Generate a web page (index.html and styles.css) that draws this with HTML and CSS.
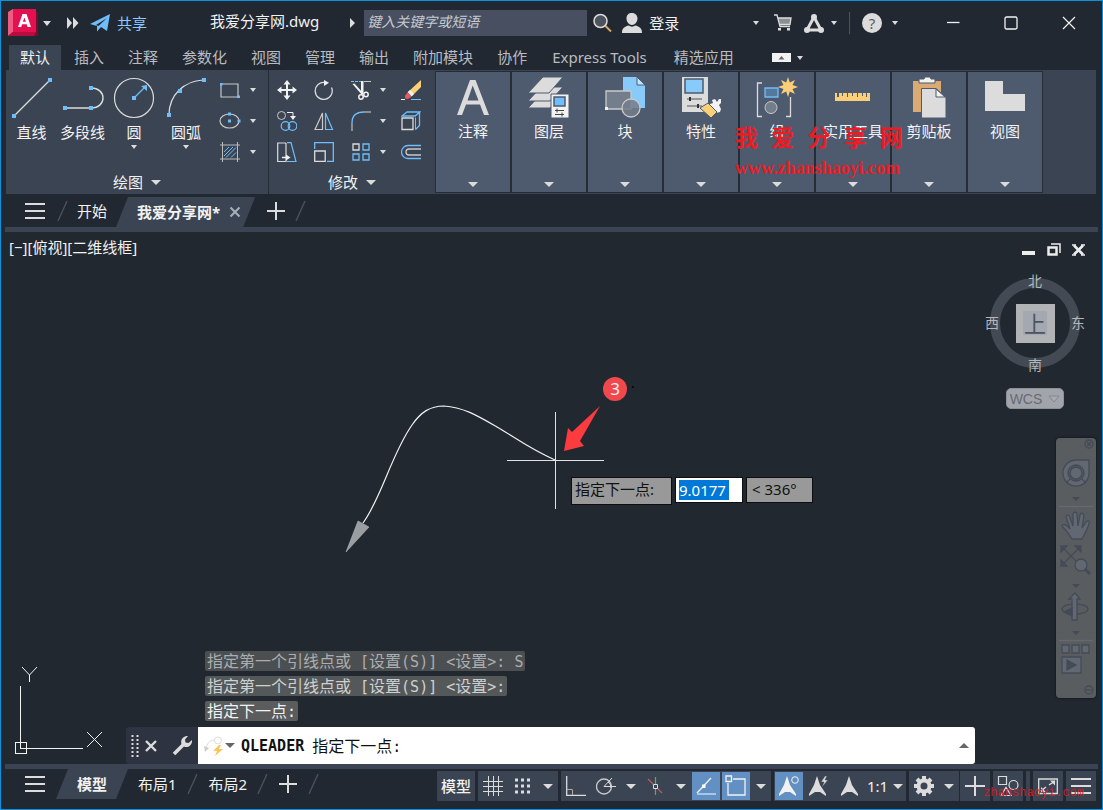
FILE: index.html
```html
<!DOCTYPE html>
<html lang="zh-CN">
<head>
<meta charset="utf-8">
<meta name="viewport" content="width=device-width, initial-scale=1">
<title>我爱分享网.dwg</title>
<link rel="stylesheet" href="styles.css">
</head>
<body>
<div class="app">
  <header class="titlebar">
    <button class="logo" aria-label="应用程序菜单">
      <svg width="30" height="28" viewBox="0 0 30 28"><path d="M4 3h26v24H4z" fill="#7c0a2b"/><path d="M0 3l5-3v23l-5 4z" fill="#ee5c83"/><path d="M0 27l5-4h23l-2 4z" fill="#b70d3f"/><path d="M5 0h23v23H5z" fill="#e51050"/><path d="M14.500 5h4L23 18h-3.500l-.8-2.800h-4.600L13.200 18H10zM16.400 8.500l-1.500 4.300h3z" fill="#fff" fill-rule="evenodd"/></svg>
      <i class="caret mid"></i>
    </button>
    <button class="more" aria-label="更多">
      <svg width="13" height="12" viewBox="0 0 13 12"><path d="M1 0l5 6-5 6zM7 0l5.500 6L7 12z" fill="#dcdcdc"/></svg>
    </button>
    <button class="share">
      <svg width="20" height="18" viewBox="0 0 20 18"><path d="M0 10L20 0 17 17l-6-4-4 4.500V12zM6 11l2.500 1L17 4z" fill="#6fbdfa" fill-rule="evenodd"/></svg>
      共享
    </button>
    <h1 class="doc-title">我爱分享网.dwg</h1>
    <button class="search-toggle" aria-label="折叠搜索"><svg width="6" height="10" viewBox="0 0 6 10"><path d="M0 0l5 5-5 5z" fill="#dcdcdc"/></svg></button>
    <input class="search" type="text" placeholder="键入关键字或短语" aria-label="键入关键字或短语">
    <button class="find" aria-label="搜索"><svg width="20" height="20" viewBox="0 0 20 20"><path d="M12.500 13l5.500 5.500" stroke="#d7a467" stroke-width="2"/><circle cx="7.500" cy="8" r="6.500" fill="#4b535c" stroke="#dcdcdc" stroke-width="1.500"/></svg></button>
    <button class="login"><svg width="20" height="20" viewBox="0 0 20 20"><path d="M10 0c3.500 0 5.500 2.500 5.500 5.500S13 12 10 12 4.500 9 4.500 5.500 6.500 0 10 0zM0 20c0-4 1.500-6 6.500-7.500 2 1.500 5 1.500 7 0C18.500 14 20 16 20 20z" fill="#dcdcdc"/></svg>登录</button>
    <div class="title-tools">
      <button aria-label="登录选项"><i class="caret"></i></button>
      <button aria-label="商店"><svg width="18" height="18" viewBox="0 0 18 18"><path d="M4 4h13l-1 7H6z" fill="#8c8f92"/><path d="M0 1h3l3 11.500h10M4 4h13l-1 6.500H6" fill="none" stroke="#dcdcdc" stroke-width="1.300"/><path d="M4 14h3v2.500H4zM13 14h3v2.500h-3z" fill="#dcdcdc"/></svg></button>
      <button class="a360" aria-label="Autodesk App"><svg width="20" height="19" viewBox="0 0 20 19"><path d="M10 3L3 16h14z" fill="none" stroke="#dcdcdc" stroke-width="3"/><circle cx="10" cy="3" r="3" fill="#dcdcdc"/><circle cx="3" cy="16" r="3" fill="#dcdcdc"/><circle cx="17" cy="16" r="3" fill="#dcdcdc"/></svg><i class="caret"></i></button>
      <span class="divider"></span>
      <button class="help" aria-label="帮助"><span class="help-mark">?</span><i class="caret"></i></button>
    </div>
    <div class="window-buttons">
      <button aria-label="最小化"><svg width="14" height="14" viewBox="0 0 14 14"><path d="M1 6.500h12.500" stroke="#f2f2f2" stroke-width="1.300"/></svg></button>
      <button aria-label="最大化"><svg width="14" height="14" viewBox="0 0 14 14"><rect x="1" y="1" width="12" height="12" rx="1.500" fill="none" stroke="#f2f2f2" stroke-width="1.300"/></svg></button>
      <button aria-label="关闭"><svg width="14" height="14" viewBox="0 0 14 14"><path d="M1 1l12 12M13 1L1 13" stroke="#f2f2f2" stroke-width="1.200"/></svg></button>
    </div>
  </header>

  <nav class="ribbon-tabs">
    <button class="rtab on">默认</button><button class="rtab">插入</button><button class="rtab">注释</button><button class="rtab">参数化</button><button class="rtab">视图</button><button class="rtab">管理</button><button class="rtab">输出</button><button class="rtab">附加模块</button><button class="rtab">协作</button><button class="rtab latin">Express Tools</button><button class="rtab">精选应用</button>
    <button class="minimize" aria-label="最小化功能区"><svg width="19" height="9" viewBox="0 0 19 9"><path d="M0 0h19v9H0z" fill="#f2f2f2"/><path d="M6.500 6.500h6l-3-3.500z" fill="#666"/></svg><i class="caret"></i></button>
  </nav>

  <section class="ribbon">
    <div class="panel draw">
      <div class="tools">
        <button class="big"><svg width="42" height="42" viewBox="0 0 42 42"><path d="M3 39L39 3" stroke="#dcdcdc" stroke-width="1.200"/><path d="M1 37h4v4H1zM37 1h4v4h-4z" fill="#6fbdfa"/></svg>直线</button>
        <button class="big"><svg width="42" height="42" viewBox="0 0 42 42"><path d="M3 31h26c16 0 16-20 0-20" fill="none" stroke="#dcdcdc" stroke-width="1.400"/><path d="M1 29h4v4H1zM27 29h4v4h-4zM27 9h4v4h-4z" fill="#6fbdfa"/></svg>多段线</button>
        <button class="big"><svg width="42" height="42" viewBox="0 0 42 42"><circle cx="21" cy="21" r="19.500" fill="none" stroke="#dcdcdc" stroke-width="1.200"/><path d="M21 21l10-10" stroke="#6fbdfa" stroke-width="1.300"/><path d="M19 19h4v4h-4zM34 8v6l-6-5z" fill="#6fbdfa"/></svg>圆<i class="caret"></i></button>
        <button class="big"><svg width="42" height="42" viewBox="0 0 42 42"><path d="M4 38C4 17 20 4 38 3" fill="none" stroke="#dcdcdc" stroke-width="1.200"/><path d="M2 36h4v4H2zM13 12h4v4h-4zM37 1h4v4h-4z" fill="#6fbdfa"/></svg>圆弧<i class="caret"></i></button>
        <div class="small-grid">
          <button aria-label="矩形"><svg width="22" height="20" viewBox="0 0 22 20"><path d="M2 4h17v13H2z" fill="none" stroke="#c9c9c9" stroke-width="1.200"/><path d="M1 3h2.500v2.500H1zM18 15.500h3V18h-3z" fill="#6fbdfa"/></svg></button><button aria-label="矩形选项"><i class="caret"></i></button>
          <button aria-label="椭圆"><svg width="22" height="20" viewBox="0 0 22 20"><ellipse cx="10.500" cy="10" rx="9.500" ry="7" fill="none" stroke="#c9c9c9" stroke-width="1.200"/><path d="M9 1.500h3v3H9zM9 8.500h3v3H9zM18.500 8.500h3v3h-3z" fill="#6fbdfa"/></svg></button><button aria-label="椭圆选项"><i class="caret"></i></button>
          <button aria-label="图案填充"><svg width="22" height="20" viewBox="0 0 22 20"><path d="M5 10l5-5M5 14l9-9M7 15.500l10-10M12 15.500l5-5" stroke="#6fbdfa"/><path d="M1 3h20M1 17h20M3.500 0v20M18.500 0v20" stroke="#bbb"/></svg></button><button aria-label="图案填充选项"><i class="caret"></i></button>
        </div>
      </div>
      <button class="panel-title">绘图<i class="caret wide"></i></button>
    </div>

    <div class="panel modify">
      <div class="modify-grid">
        <button aria-label="移动"><svg width="20" height="20" viewBox="0 0 20 20"><path d="M10 3v14M3 10h14" stroke="#f2f2f2" stroke-width="2"/><path d="M10 0l3.500 4.500h-7zM10 20l-3.500-4.500h7zM0 10l4.500-3.500v7zM20 10l-4.500 3.500v-7z" fill="#f2f2f2"/></svg></button>
        <button aria-label="旋转"><svg width="20" height="20" viewBox="0 0 20 20"><path d="M17.500 7.500A8.500 8.500 0 1 1 11 2.500" fill="none" stroke="#dcdcdc" stroke-width="1.300"/><path d="M10 0l5 2.800L10 6z" fill="#f2f2f2"/></svg></button>
        <button aria-label="修剪"><svg width="20" height="20" viewBox="0 0 20 20"><path d="M0 1.500h10" stroke="#6fbdfa" stroke-dasharray="3 1"/><path d="M13 1.500h7" stroke="#c9c9c9"/><path d="M1.500 4l2-.5 9 10-1.500 1.500zM10 1h2.500v12.500H10z" fill="#f2f2f2"/><circle cx="10" cy="17" r="2.200" fill="none" stroke="#f2f2f2" stroke-width="1.500"/><circle cx="15" cy="14.500" r="2.200" fill="none" stroke="#f2f2f2" stroke-width="1.500"/></svg></button>
        <button aria-label="修剪选项"><i class="caret"></i></button>
        <button aria-label="删除"><svg width="20" height="20" viewBox="0 0 20 20"><path d="M0 19.500h4" stroke="#f2f2f2"/><path d="M10 19.500h10" stroke="#6fbdfa"/><path d="M20 0v7l-9 9-4-4z" fill="#fbcf78"/><path d="M9 10l4 4-2.500 2.500-4-4z" fill="#f2f2f2"/><path d="M7 12.500l3.500 4C8 19 5 20 4 17.500c-.5-2 1-3.500 3-5z" fill="#ef5461"/></svg></button>

        <button aria-label="复制"><svg width="20" height="20" viewBox="0 0 20 20"><circle cx="4.500" cy="4.500" r="4" fill="none" stroke="#c9c9c9"/><circle cx="8.500" cy="15" r="4.300" fill="none" stroke="#6fbdfa" stroke-width="1.200"/><circle cx="15.500" cy="15" r="4.300" fill="none" stroke="#6fbdfa" stroke-width="1.200"/><path d="M10 1.500h6V6" fill="none" stroke="#f2f2f2"/><path d="M13 5h6l-3 4z" fill="#f2f2f2"/></svg></button>
        <button aria-label="镜像"><svg width="20" height="20" viewBox="0 0 20 20"><path d="M8.500 2v16.500H1z" fill="none" stroke="#c9c9c9" stroke-width="1.200"/><path d="M11.500 2v16.500h7z" fill="none" stroke="#6fbdfa" stroke-width="1.200"/></svg></button>
        <button aria-label="圆角"><svg width="20" height="20" viewBox="0 0 20 20"><path d="M1 20v-8M13 1h7" stroke="#dcdcdc"/><path d="M1 12C1 4 6 1 13 1" fill="none" stroke="#6fbdfa" stroke-width="1.300"/></svg></button>
        <button aria-label="圆角选项"><i class="caret"></i></button>
        <button aria-label="分解"><svg width="20" height="20" viewBox="0 0 20 20"><path d="M1 5l5-4h13l-5 4zM14.500 18.500l4-4V2" fill="none" stroke="#6fbdfa" stroke-width="1.300"/><path d="M1 7h11v11.500H1z" fill="none" stroke="#dcdcdc" stroke-width="1.300"/><path d="M14.500 6.500v12" stroke="#6fbdfa"/></svg></button>

        <button aria-label="拉伸"><svg width="20" height="20" viewBox="0 0 20 20"><path d="M9 1H.700v18.500H9V1" fill="none" stroke="#dcdcdc" stroke-width="1.200"/><path d="M10 .700h4l5 18.800h-9" fill="none" stroke="#6fbdfa" stroke-width="1.200"/><path d="M5 15.500h5" stroke="#f2f2f2" stroke-width="1.500"/><path d="M9 12.500l4.500 3-4.500 3z" fill="#f2f2f2"/></svg></button>
        <button aria-label="缩放"><svg width="20" height="20" viewBox="0 0 20 20"><path d="M.700 7V.700h18.600v18.600H13" fill="none" stroke="#6fbdfa" stroke-width="1.300"/><path d="M.700 9h10.500v10.300H.700z" fill="none" stroke="#dcdcdc" stroke-width="1.300"/></svg></button>
        <button aria-label="阵列"><svg width="20" height="20" viewBox="0 0 20 20"><path d="M2 2h6v6H2z" fill="none" stroke="#dcdcdc" stroke-width="1.300"/><path d="M12 2h6v6h-6zM2 12h6v6H2zM12 12h6v6h-6z" fill="none" stroke="#6fbdfa" stroke-width="1.300"/></svg></button>
        <button aria-label="阵列选项"><i class="caret"></i></button>
        <button aria-label="偏移"><svg width="22" height="20" viewBox="0 0 22 20"><path d="M21 3.500H8a6.500 6.500 0 0 0 0 13h13" fill="none" stroke="#6fbdfa" stroke-width="1.300"/><path d="M21 7H9a3 3 0 0 0 0 6h12" fill="none" stroke="#c9c9c9" stroke-width="1.300"/></svg></button>
      </div>
      <button class="panel-title">修改<i class="caret wide"></i></button>
    </div>

    <button class="folded"><svg width="42" height="42" viewBox="0 0 42 42"><path d="M18 3h5.500L37 38h-5l-4-10.500H14L10 38H5zM20.700 8.500L15.500 23.500h11z" fill="#dcdcdc" fill-rule="evenodd"/></svg><span>注释</span><i class="caret wide"></i></button>
    <button class="folded"><svg width="42" height="42" viewBox="0 0 42 42"><path d="M0 31l13-14h22L22 31z" fill="#dcdcdc" stroke="#4e5a6e"/><path d="M0 24l13-14h22L22 24z" fill="#dcdcdc" stroke="#4e5a6e"/><path d="M0 16L15 0h20L21 16z" fill="#dcdcdc" stroke="#4e5a6e"/><path d="M23 17h18v24H23z" fill="#f2f2f2" stroke="#4e5a6e"/><path d="M26 20h11v9H26z" fill="#6fbdfa" stroke="#4e5a6e" stroke-width="1.500"/><path d="M27 33.500h9M27 37.500h9M29 31.500v4M34 35.500v4" stroke="#444"/></svg><span>图层</span><i class="caret wide"></i></button>
    <button class="folded"><svg width="42" height="42" viewBox="0 0 42 42"><path d="M19 0h14l8 8v23H19z" fill="#88cbfb"/><path d="M33 0v8h8z" fill="#c2e5ff" stroke="#4e5a6e"/><path d="M2 14h25v18H2z" fill="#747d8b" stroke="#c9c9c9" stroke-width="1.300"/><circle cx="27" cy="31" r="9" fill="#747d8b" fill-opacity=".85" stroke="#c9c9c9" stroke-width="1.300"/><path d="M1 30h3v3H1z" fill="#f2f2f2"/></svg><span>块</span><i class="caret wide"></i></button>
    <button class="folded"><svg width="42" height="42" viewBox="0 0 42 42"><path d="M2 0h26v35H2z" fill="#dcdcdc"/><path d="M5 2h18v14H5z" fill="#88cbfb" stroke="#4e5a6e" stroke-width="1.500"/><path d="M7 22h15M7 29h15" stroke="#555"/><path d="M10 20v4M18 27v4" stroke="#333" stroke-width="2"/><path d="M27 28l6-2-1-3 3-1 2 3 2-3h2v4l-2 2 2 4-1 3-4 1z" fill="#f2f2f2"/><path d="M20 31l8-5 9 9-6 6z" fill="#fbcf78" stroke="#4e5a6e"/></svg><span>特性</span><i class="caret wide"></i></button>
    <button class="folded"><svg width="42" height="42" viewBox="0 0 42 42"><path d="M6 6H1.500v33.500H6M30 39.500h4.500V20" fill="none" stroke="#dcdcdc" stroke-width="1.300"/><path d="M9 11h13v9H9z" fill="#56789d" stroke="#6fbdfa" stroke-width="1.300"/><circle cx="15" cy="30.500" r="6" fill="#747d8b" stroke="#c9c9c9"/><path d="M32 0l1.800 5.500L39 3l-2.500 5L42 10l-5.500 2 2.500 5-5.200-2.500L32 20l-1.800-5.500L25 17l2.500-5L22 10l5.500-2L25 3l5.200 2.500z" fill="#fbcf78"/></svg><span>组</span><i class="caret wide"></i></button>
    <button class="folded"><svg width="42" height="42" viewBox="0 0 42 42"><path d="M3 16h2v4h2v-4h3v3h1v-3h4v4h1v-4h4v3h1v-3h4v4h1v-4h4v3h1v-3h3v4h1v-4h3v8H3z" fill="#fbcf78"/></svg><span>实用工具</span><i class="caret wide"></i></button>
    <button class="folded"><svg width="42" height="42" viewBox="0 0 42 42"><path d="M5 4h28v31H5z" fill="#d9ab73"/><path d="M11 6V2h5l1-2h5l1 2h4v4z" fill="#f2f2f2" stroke="#4e5a6e"/><path d="M13.500 11.500H28l10 9V41H13.500z" fill="#dcdcdc" stroke="#4e5a6e"/><path d="M28 12v8h9z" fill="#f2f2f2" stroke="#4e5a6e"/></svg><span>剪贴板</span><i class="caret wide"></i></button>
    <button class="folded"><svg width="42" height="42" viewBox="0 0 42 42"><path d="M1 4h18v13h22v17H1z" fill="#dcdcdc"/></svg><span>视图</span><i class="caret wide"></i></button>
    <div class="watermark" aria-hidden="true">
      <div class="wm-name"><span>我</span><span>爱</span><span>分</span><span>享</span><span>网</span></div>
      <div class="wm-url">www.zhanshaoyi.com</div>
    </div>
  </section>

  <nav class="file-tabs">
    <button class="burger" aria-label="文件选项卡菜单"><i></i><i></i><i></i></button>
    <svg class="slash" width="12" height="22" viewBox="0 0 12 22"><path d="M1 21L10 1" stroke="#4b5463" stroke-width="1.300"/></svg>
    <button class="file-tab">开始</button>
    <button class="file-tab on">我爱分享网*<svg width="12" height="12" viewBox="0 0 12 12"><path d="M1.500 1.500l9 9M10.500 1.500l-9 9" stroke="#a9afb8" stroke-width="2"/></svg></button>
    <button class="plus" aria-label="新建图形"><svg width="18" height="18" viewBox="0 0 18 18"><path d="M9 0v18M0 9h18" stroke="#dcdcdc" stroke-width="2"/></svg></button>
    <svg class="slash" width="12" height="22" viewBox="0 0 12 22"><path d="M1 21L10 1" stroke="#4b5463" stroke-width="1.300"/></svg>
  </nav>

  <main class="canvas">
    <svg class="drawing" width="700" height="400" viewBox="1 232 700 400">
      <path d="M363 523C382 497 391 455 412 425C421 412 430 406 444 406C463 407 478 416 497 427S530 449 555 460" fill="none" stroke="#f2f2f2" stroke-width="1.200"/>
      <path d="M346 552l12-31 11 6z" fill="#9b9ea1" stroke="#c0c2c4" stroke-width=".5"/>
      <path d="M555.500 412v97M507 460.500h97" stroke="#e2e2e2" shape-rendering="crispEdges"/>
      <path d="M600 406l-20 35 4 5-20 5 4-23 4 4z" fill="#fb3b3d"/>
      <path d="M632 386h2v2h-2z" fill="#0a0c0f"/>
    </svg>
    <span class="step">3</span>
    <div class="view-label">[−][俯视][二维线框]</div>
    <div class="dyn">
      <label for="dist" class="dyn-box prompt">指定下一点:</label>
      <span class="dyn-field"><input id="dist" type="text" value="9.0177"></span>
      <span class="dyn-box angle">&lt; 336°</span>
    </div>
    <div class="view-buttons">
      <button aria-label="最小化视口"><svg width="14" height="14" viewBox="0 0 14 14"><path d="M0 8h13v4H0z" fill="#ededed"/></svg></button>
      <button aria-label="还原视口"><svg width="14" height="14" viewBox="0 0 14 14"><path d="M4 1h9v9" fill="none" stroke="#ededed" stroke-width="1.500"/><path d="M1.500 4.500h8v7h-8z" fill="none" stroke="#ededed" stroke-width="2.500"/></svg></button>
      <button aria-label="关闭视口"><svg width="14" height="14" viewBox="0 0 14 14"><path d="M2 2.500l9 9M11 2.500l-9 9" stroke="#ededed" stroke-width="2.600"/><path d="M0 2h4M9 2h4M0 12h4M9 12h4" stroke="#ededed" stroke-width="1.500"/></svg></button>
    </div>
    <div class="cube">
      <span class="north">北</span><span class="west">西</span>
      <button class="face"><span>上</span></button>
      <span class="east">东</span><span class="south">南</span>
    </div>
    <button class="wcs">WCS<svg width="12" height="8" viewBox="0 0 12 8"><path d="M1 1h10L6 7z" fill="#a9acb4" stroke="#83868f"/></svg></button>
    <div class="navbar">
      <svg width="40" height="260" viewBox="1056 439 40 260" fill="none" stroke="#444b57" stroke-width="1.300">
        <circle cx="1089" cy="445" r="4"/><path d="M1087 443l4 4M1091 443l-4 4"/>
        <path d="M1089 461v13a13 13 0 1 1-13-13z" fill="#626872"/><circle cx="1076" cy="474" r="8" fill="#595d60"/><circle cx="1076" cy="474" r="6" fill="#626872"/><path d="M1070 480l-4 4M1082 480l4 4"/>
        <path d="M1072 498h8l-4 4z" fill="#444b57" stroke="none"/>
        <path d="M1059 507.500h34" stroke="#656a6e"/>
        <path d="M1072 540c-3-5-6-9-10-13 1-3 5-1 8 3l-4-12c1-3 4-2 4 1l3 8v-12c1-3 4-2 4 0l1 12 2-11c1-3 4-2 4 1l-2 12 4-6c2-2 4-1 3 2-2 6-5 11-7 15z" fill="#626872"/>
        <path d="M1062 548l18 18M1062 566l18-18"/><path d="M1061 547h6l-6 6zM1081 547v6l-6-6zM1061 567v-6l6 6z" fill="#444b57"/><circle cx="1081" cy="566" r="6" fill="#626872"/><path d="M1085 570l5 5" stroke-width="3"/>
        <path d="M1072 585h8l-4 4z" fill="#444b57" stroke="none"/>
        <ellipse cx="1075" cy="610" rx="13" ry="5"/><path d="M1075 594l5 6h-3v21h-5v-21h-3z" fill="#626872"/><path d="M1072 609l-8 4 8 4z" fill="#444b57"/>
        <path d="M1072 632h8l-4 4z" fill="#444b57" stroke="none"/>
        <path d="M1059 641.500h34" stroke="#656a6e"/>
        <path d="M1062 646h7v8h-7zM1072 646h7v8h-7zM1082 646h7v8h-7zM1062 658h19v16h-19z" fill="#626872"/><path d="M1067 661v10l9-5z" fill="#444b57"/>
        <circle cx="1089" cy="691" r="4"/><path d="M1086 691h6"/>
      </svg>
    </div>
    <svg class="ucs" width="100" height="96" viewBox="10 662 100 96" fill="none" stroke="#f2f2f2"><path d="M15.500 742.500h11v11h-11zM20.500 686v62.500H83" shape-rendering="crispEdges"/><path d="M22 667l7.500 8 7.500-8M29.500 675v7M87 732l15 15M102 732l-15 15"/></svg>
    <div class="console">
      <div class="history">
        <p class="h1">指定第一个引线点或<code> [</code>设置<code>(S)] &lt;</code>设置<code>&gt;: S</code></p>
        <p class="h2">指定第一个引线点或<code> [</code>设置<code>(S)] &lt;</code>设置<code>&gt;:</code></p>
        <p class="h3">指定下一点<code>:</code></p>
      </div>
      <div class="command">
        <div class="grip">
          <svg width="8" height="22" viewBox="0 0 8 22"><path d="M1.500 0v22M6.500 0v22" stroke="#dcdcdc" stroke-width="2" stroke-dasharray="2 2"/></svg>
          <button aria-label="关闭命令行"><svg width="12" height="12" viewBox="0 0 12 12"><path d="M1 1l10 10M11 1L1 11" stroke="#dcdcdc" stroke-width="2.400"/></svg></button>
          <button class="wrench" aria-label="自定义"><svg width="20" height="20" viewBox="0 0 20 20"><path d="M2 18L12 8" stroke="#dcdcdc" stroke-width="3.500"/><path d="M16 0l-3 3.500.5 3 3 .5L20 4c.5 5-4 8.500-8 6.500L9.500 8C8 3.500 12-.5 16 0z" fill="#dcdcdc"/></svg></button>
        </div>
        <label class="prompt-line">
          <svg width="20" height="20" viewBox="0 0 20 20"><circle cx="14" cy="4.500" r="3.500" fill="none" stroke="#ddd"/><path d="M10.500 4C5 4 3 8 2 13" fill="none" stroke="#ddd"/><path d="M0 10l5 2-4 4z" fill="#ccc"/><path d="M15 9l-6 6h4l-2 5 8-7h-4l2-4z" fill="#fbc559"/></svg>
          <i class="caret wide dark"></i>
          <b>QLEADER</b><span>指定下一点<code>:</code></span>
          <input type="text" aria-label="命令">
          <i class="caret-up"></i>
        </label>
      </div>
    </div>
  </main>

  <footer class="status">
    <nav class="layout-tabs">
      <button class="burger" aria-label="布局菜单"><i></i><i></i><i></i></button>
      <button class="layout on">模型</button>
      <button class="layout">布局1</button>
      <svg class="slash" width="12" height="22" viewBox="0 0 12 22"><path d="M1 21L10 1" stroke="#4b5463" stroke-width="1.300"/></svg>
      <button class="layout">布局2</button>
      <svg class="slash" width="12" height="22" viewBox="0 0 12 22"><path d="M1 21L10 1" stroke="#4b5463" stroke-width="1.300"/></svg>
      <button class="plus" aria-label="新建布局"><svg width="18" height="18" viewBox="0 0 18 18"><path d="M9 0v18M0 9h18" stroke="#dcdcdc" stroke-width="2"/></svg></button>
      <svg class="slash" width="12" height="22" viewBox="0 0 12 22"><path d="M1 21L10 1" stroke="#4b5463" stroke-width="1.300"/></svg>
    </nav>
    <div class="status-tools">
      <div class="group"><button class="model">模型</button></div>
      <div class="group">
        <button aria-label="栅格"><svg width="20" height="20" viewBox="0 0 20 20"><path d="M5.500 0v20M10.500 0v20M15.500 0v20M0 5.500h20M0 10.500h20M0 15.500h20" stroke="#dcdcdc"/></svg></button>
        <button aria-label="捕捉"><svg width="20" height="20" viewBox="0 0 20 20"><path d="M2 4h17M2 10h17M2 16h17" stroke="#dcdcdc" stroke-width="3" stroke-dasharray="3 3"/></svg></button>
        <button class="drop" aria-label="捕捉选项"><i class="caret wide"></i></button>
      </div>
      <div class="group">
        <button aria-label="正交"><svg width="20" height="20" viewBox="0 0 20 20"><path d="M.700 0v19.300H20" fill="none" stroke="#dcdcdc" stroke-width="1.300"/><path d="M1 13.500h5.500V19" fill="none" stroke="#aaa"/></svg></button>
        <button aria-label="极轴"><svg width="20" height="20" viewBox="0 0 20 20"><circle cx="8" cy="10.500" r="7.500" fill="none" stroke="#c9c9c9" stroke-width="1.300"/><path d="M20 10.500H8L16 2" fill="none" stroke="#dcdcdc"/><path d="M12 6q3 1 3 6" fill="none" stroke="#dcdcdc"/></svg></button>
        <button class="drop" aria-label="极轴选项"><i class="caret wide"></i></button>
        <button aria-label="等轴测草图"><svg width="20" height="20" viewBox="0 0 20 20"><path d="M2 3l14 14" stroke="#b95c62" stroke-width="1.200"/><path d="M9.500 1v18" stroke="#52ae73" stroke-width="1.200"/><path d="M7.500 8.500h4v4h-4z" fill="#3b4453" stroke="#dcdcdc"/></svg></button>
        <button class="drop" aria-label="等轴测选项"><i class="caret wide"></i></button>
        <button class="active" aria-label="对象捕捉追踪"><svg width="20" height="20" viewBox="0 0 20 20"><path d="M15 2L1 17" stroke="#f2f2f2" stroke-width="1.300"/><path d="M1 18h19" stroke="#a9c6e6" stroke-width="2"/><path d="M6 8.500h3.500V12H6z" fill="#fff"/></svg></button>
        <button class="active" aria-label="对象捕捉"><svg width="22" height="22" viewBox="0 0 22 22"><path d="M8 4h12v16H3V8" fill="none" stroke="#f2f2f2" stroke-width="1.300"/><path d="M1 1h5.500v5.500H1z" fill="none" stroke="#f2f2f2" stroke-width="1.300"/></svg></button>
        <button class="drop" aria-label="捕捉设置"><i class="caret wide"></i></button>
      </div>
      <div class="group">
        <button class="active" aria-label="注释可见性"><svg width="20" height="20" viewBox="0 0 20 20"><path d="M8 0l3 9 6 9v2l-6-4H6l-6 4v-2l5-9z" fill="#f2f2f2"/><circle cx="16" cy="4" r="3.300" fill="#6390c2" stroke="#f2f2f2"/></svg></button>
        <button aria-label="自动缩放"><svg width="20" height="20" viewBox="0 0 20 20"><path d="M8 0l3 9 6 9v2l-6-4H6l-6 4v-2l5-9z" fill="#dcdcdc"/><path d="M16 0l-4 6h3l-2 5 6-7h-3l2-4z" fill="#dcdcdc" stroke="#3b4453" stroke-width=".5"/></svg></button>
        <button aria-label="注释比例"><svg width="20" height="20" viewBox="0 0 20 20"><path d="M10 0l3 9 6 9v2l-6-4H8l-6 4v-2l5-9z" fill="#dcdcdc"/></svg></button>
        <button class="ratio">1:1<i class="caret wide"></i></button>
      </div>
      <div class="group workspace">
        <button aria-label="切换工作空间"><svg width="20" height="20" viewBox="0 0 20 20"><circle cx="10" cy="10" r="5.500" fill="none" stroke="#dcdcdc" stroke-width="4"/><path d="M10 0v4M10 16v4M0 10h4M16 10h4M3 3l3 3M14 14l3 3M17 3l-3 3M6 14l-3 3" stroke="#dcdcdc" stroke-width="4"/></svg></button>
        <button class="drop" aria-label="工作空间选项"><i class="caret wide"></i></button>
        <button class="monitor" aria-label="注释监视器"><svg width="20" height="20" viewBox="0 0 20 20"><path d="M10 0v20M0 10h20" stroke="#dcdcdc" stroke-width="2"/></svg></button>
      </div>
      <div class="group"><button aria-label="隔离对象"><svg width="22" height="22" viewBox="0 0 22 22" fill="none" stroke="#dcdcdc" stroke-width="1.200"><path d="M1.500 1.500h8v8h-8zM4 20.500l5-8 5 8z"/><circle cx="16.500" cy="10" r="4.500"/></svg></button></div>
      <div class="group sliver"></div>
      <div class="group"><button aria-label="全屏显示"><svg width="20" height="20" viewBox="0 0 20 20"><path d="M.700 3h18.600v14.500H.700z" fill="none" stroke="#dcdcdc" stroke-width="1.300"/><path d="M11 9l6-4M3 15l5-4" stroke="#dcdcdc" stroke-width="1.500"/><path d="M12 4.500h5v5zM3 11v5h5z" fill="#dcdcdc"/></svg></button></div>
      <div class="group"><button class="burger" aria-label="自定义状态栏"><i></i><i></i><i></i></button></div>
    </div>
    <div class="wm-corner" aria-hidden="true">zhanshaoyi.com</div>
  </footer>
</div>
</body>
</html>
```
FILE: styles.css
```css
*, *::before { box-sizing: border-box; }

body {
  margin: 0;
  background: #222831;
  color: #f2f2f2;
  font: 15px/20px "Noto Sans", "Noto Sans CJK SC", sans-serif;
}

button, input {
  margin: 0;
  padding: 0;
  border: 0;
  background: none;
  color: inherit;
  font: inherit;
}

button {
  display: flex;
  align-items: center;
  justify-content: center;
  white-space: nowrap;
}

svg { display: block; flex: none; }
p { margin: 0; }

.app {
  display: flex;
  flex-direction: column;
  min-height: 100vh;
  border: 1px solid #0a93dc;
}

.caret {
  width: 0;
  border: 3px solid transparent;
  border-top: 4px solid #dcdcdc;
  border-bottom: 0;
}
.caret.mid { border-width: 5px 4px 0; }
.caret.wide { border-width: 5px 5px 0; }
.caret.dark { border-top-color: #666; }
.caret-up {
  border: 5px solid transparent;
  border-bottom-color: #666;
  border-top: 0;
}

/* Title bar */
.titlebar {
  display: flex;
  align-items: center;
  height: 44px;
  padding: 0 4px 0 7px;
}
.logo { gap: 5px; }
.more { margin-left: 15px; }
.share { gap: 7px; margin-left: 11px; color: #8ccaff; }
.doc-title {
  margin: 0 31px 4px 63px;
  font-size: 15px;
  font-weight: 400;
  line-height: 20px;
  white-space: nowrap;
}
.search {
  width: 223px;
  height: 26px;
  margin-left: 8px;
  padding: 0 3px 3px;
  background: #474f61;
  font-size: 14px;
  font-style: italic;
}
.search::placeholder { color: #c6cad1; opacity: 1; }
.find { margin-left: 6px; }
.login { gap: 7px; margin-left: 9px; }
.title-tools {
  display: flex;
  align-items: center;
  gap: 12px;
  margin-left: auto;
}
.title-tools button:first-child { margin-right: 3px; }
.a360 { gap: 7px; }
.divider { width: 1px; height: 22px; background: #4b5463; }
.help { gap: 10px; margin-right: 26px; }
.help-mark {
  width: 20px;
  border-radius: 50%;
  background: #dcdcdc;
  color: #555b63;
  text-align: center;
}
.window-buttons { display: flex; }
.window-buttons button { width: 58px; height: 40px; }

/* Ribbon tabs */
.ribbon-tabs { display: flex; padding-left: 7px; }
.rtab { height: 25px; margin: 0 1px; padding: 0 11px 2px; color: #b9bcc1; }
.rtab.on { background: #3b4453; color: #f2f2f2; }
.rtab.latin { padding: 0 14px 2px 12px; }
.minimize { gap: 6px; margin-left: 26px; }

/* Ribbon */
.ribbon {
  position: relative;
  display: flex;
  height: 124px;
  margin: 0 6px 0 5px;
  background: #3b4453;
}
.panel { display: flex; flex-direction: column; justify-content: space-between; padding-bottom: 2px; }
.draw { width: 263px; border-right: 1px solid #262c36; }
.modify { width: 166px; }
.tools { display: flex; padding-top: 7px; }
.big {
  flex-direction: column;
  justify-content: flex-start;
  width: 51px;
  line-height: 26px;
}
.big:nth-child(n+3) { width: 52px; }
.small-grid {
  display: grid;
  grid-template-columns: 36px 10px;
  grid-auto-rows: 31px;
  margin-top: -3px;
}
.modify-grid {
  display: grid;
  grid-template-columns: 36px 38px 36px 8px 48px;
  grid-auto-rows: 31px;
  padding-top: 4px;
}
.panel-title { gap: 8px; height: 20px; }
.folded {
  flex-direction: column;
  justify-content: flex-start;
  width: 76px;
  margin: 1px 0;
  padding: 5px 0;
  border: 1px solid #262c36;
  background: #4e5a6e;
}
.folded span { line-height: 24px; }
.folded .caret { margin-top: auto; }
.watermark {
  position: absolute;
  left: 729px;
  top: 52px;
  width: 168px;
  color: #ec1c24;
  font-weight: 700;
}
.wm-name { display: flex; justify-content: space-between; font-size: 23px; line-height: 30px; }
.wm-url { font: 700 18px/32px "Liberation Serif", serif; }

/* Drawing tabs */
.file-tabs {
  display: flex;
  align-items: center;
  height: 38px;
  margin: 0 4px;
  padding-left: 20px;
  border-bottom: 5px solid #3b4453;
}
.burger { flex-direction: column; gap: 5px; width: 20px; }
.burger i { width: 20px; height: 2px; background: #dcdcdc; }
.file-tabs .burger { margin-right: 12px; }
.file-tab { padding: 0 9px 0 8px; }
.file-tab.on {
  align-self: flex-end;
  gap: 9px;
  height: 30px;
  padding: 0 14px 0 21px;
  background: #3b4453;
  clip-path: polygon(12px 0, 100% 0, calc(100% - 12px) 100%, 0 100%);
  font-weight: 700;
}
.file-tabs .plus { margin: 0 10px 0 12px; }

/* Drawing area */
.canvas { position: relative; flex: 1; min-height: 532px; background: #212830; }
.drawing { position: absolute; left: 0; top: 0; }
.view-label { position: absolute; left: 8px; top: 5px; }
.step {
  position: absolute;
  left: 602px;
  top: 145px;
  width: 24px;
  border-radius: 50%;
  background: #f0484c;
  font-size: 17px;
  line-height: 24px;
  text-align: center;
}
.dyn {
  position: absolute;
  left: 570px;
  top: 245px;
  display: flex;
  align-items: flex-start;
  gap: 3px;
  color: #111;
}
.dyn-box, .dyn-field { height: 26px; padding: 0 3px; border: 1px solid #0c0e11; line-height: 22px; }
.dyn-box { background: #999; }
.prompt { width: 101px; height: 28px; }
.angle { width: 67px; padding: 0 5px; }
.dyn-field { display: flex; align-items: center; width: 68px; background: #fff; }
.dyn-field input { width: 50px; height: 20px; background: #0078d7; color: #fff; }
.view-buttons { position: absolute; right: 16px; top: 11px; display: flex; gap: 11px; }
.cube {
  position: absolute;
  right: 17px;
  top: 39px;
  display: grid;
  grid-template-columns: 14px 72px 14px;
  grid-template-rows: 20px 64px 20px;
  place-items: center;
  justify-items: center;
  color: #b4b6b8;
  font-size: 14px;
}
.cube::before {
  content: "";
  position: absolute;
  left: 5px;
  top: 7px;
  width: 90px;
  height: 90px;
  border: 10px solid #444a53;
  border-radius: 50%;
}
.cube > * { position: relative; }
.cube .north, .cube .south { grid-column: 2; }
.cube .west { grid-column: 1; }
.face { width: 39px; height: 39px; background: #b1b3b4; color: #4d5461; }
.face span { width: 24px; background: #a4a8b1; font-size: 22px; line-height: 24px; }
.wcs {
  position: absolute;
  right: 38px;
  top: 156px;
  gap: 6px;
  width: 58px;
  height: 21px;
  border: 1px solid #8d9099;
  border-radius: 5px;
  background: #a2a4ac;
  color: #676b74;
  font: 14px/18px "Liberation Sans", sans-serif;
}
.navbar {
  position: absolute;
  right: 6px;
  top: 206px;
  border-radius: 4px;
  background: #595d60;
  box-shadow: 0 0 3px #0e1115;
}
.ucs { position: absolute; left: 9px; bottom: 6px; }

.console { position: absolute; left: 125px; right: 127px; bottom: 0; }
.history {
  display: flex;
  flex-direction: column;
  align-items: flex-start;
  gap: 5px;
  margin: 0 0 6px 79px;
  font-size: 16px;
  line-height: 20px;
}
.history p { height: 20px; padding: 0 2px; border-radius: 2px; background: #5a5c5d; white-space: nowrap; }
.history .h1 { background: #4c4f52; color: #abadaf; }
.history .h2 { background: #555859; color: #cfd0d1; }
code { font: 15px/16px "DejaVu Sans Mono", monospace; white-space: pre; }
.command { display: flex; height: 37px; }
.grip {
  display: flex;
  align-items: center;
  gap: 6px;
  width: 72px;
  padding: 0 6px 0 5px;
  border-radius: 3px 0 0 3px;
  background: #2d3340;
}
.wrench { margin-left: auto; }
.prompt-line {
  flex: 1;
  display: flex;
  align-items: center;
  padding: 0 6px;
  border-radius: 0 3px 3px 0;
  background: #fff;
  color: #111;
  font-size: 16px;
}
.prompt-line b { margin: 0 8px 0 6px; font: 700 15px/20px "DejaVu Sans Mono", monospace; }
.prompt-line .caret { margin-left: 1px; }
.prompt-line input { flex: 1; min-width: 0; outline: 0; }

/* Status bar */
.status {
  position: relative;
  display: flex;
  justify-content: space-between;
  height: 45px;
  margin: 0 4px;
  border-top: 5px solid #3b4453;
}
.layout-tabs { display: flex; align-items: center; height: 30px; padding-left: 20px; }
.layout { padding: 0 10px; }
.layout.on {
  height: 30px;
  margin-left: 11px;
  padding: 0 21px;
  background: #3b4453;
  clip-path: polygon(12px 0, 100% 0, calc(100% - 12px) 100%, 0 100%);
  font-weight: 700;
}
.layout-tabs .plus { margin: 0 11px 0 10px; }
.status-tools { display: flex; gap: 3px; padding: 2px 2px 0 0; }
.group { display: flex; align-items: center; height: 30px; background: #3b4453; }
.group button { width: 30px; height: 28px; }
.group .model { width: 38px; font-weight: 500; }
.group .drop { width: 20px; }
.group .active { width: 28px; margin: 0 1px; background: #6390c2; }
.group .ratio { gap: 5px; width: 42px; }
.group .monitor { width: 31px; height: 30px; border-left: 1px solid #222831; }
.group.sliver { width: 4px; }
.wm-corner {
  position: absolute;
  right: 14px;
  bottom: 6px;
  color: #c91f2a;
  font: 12px/20px "Liberation Mono", monospace;
}
```
